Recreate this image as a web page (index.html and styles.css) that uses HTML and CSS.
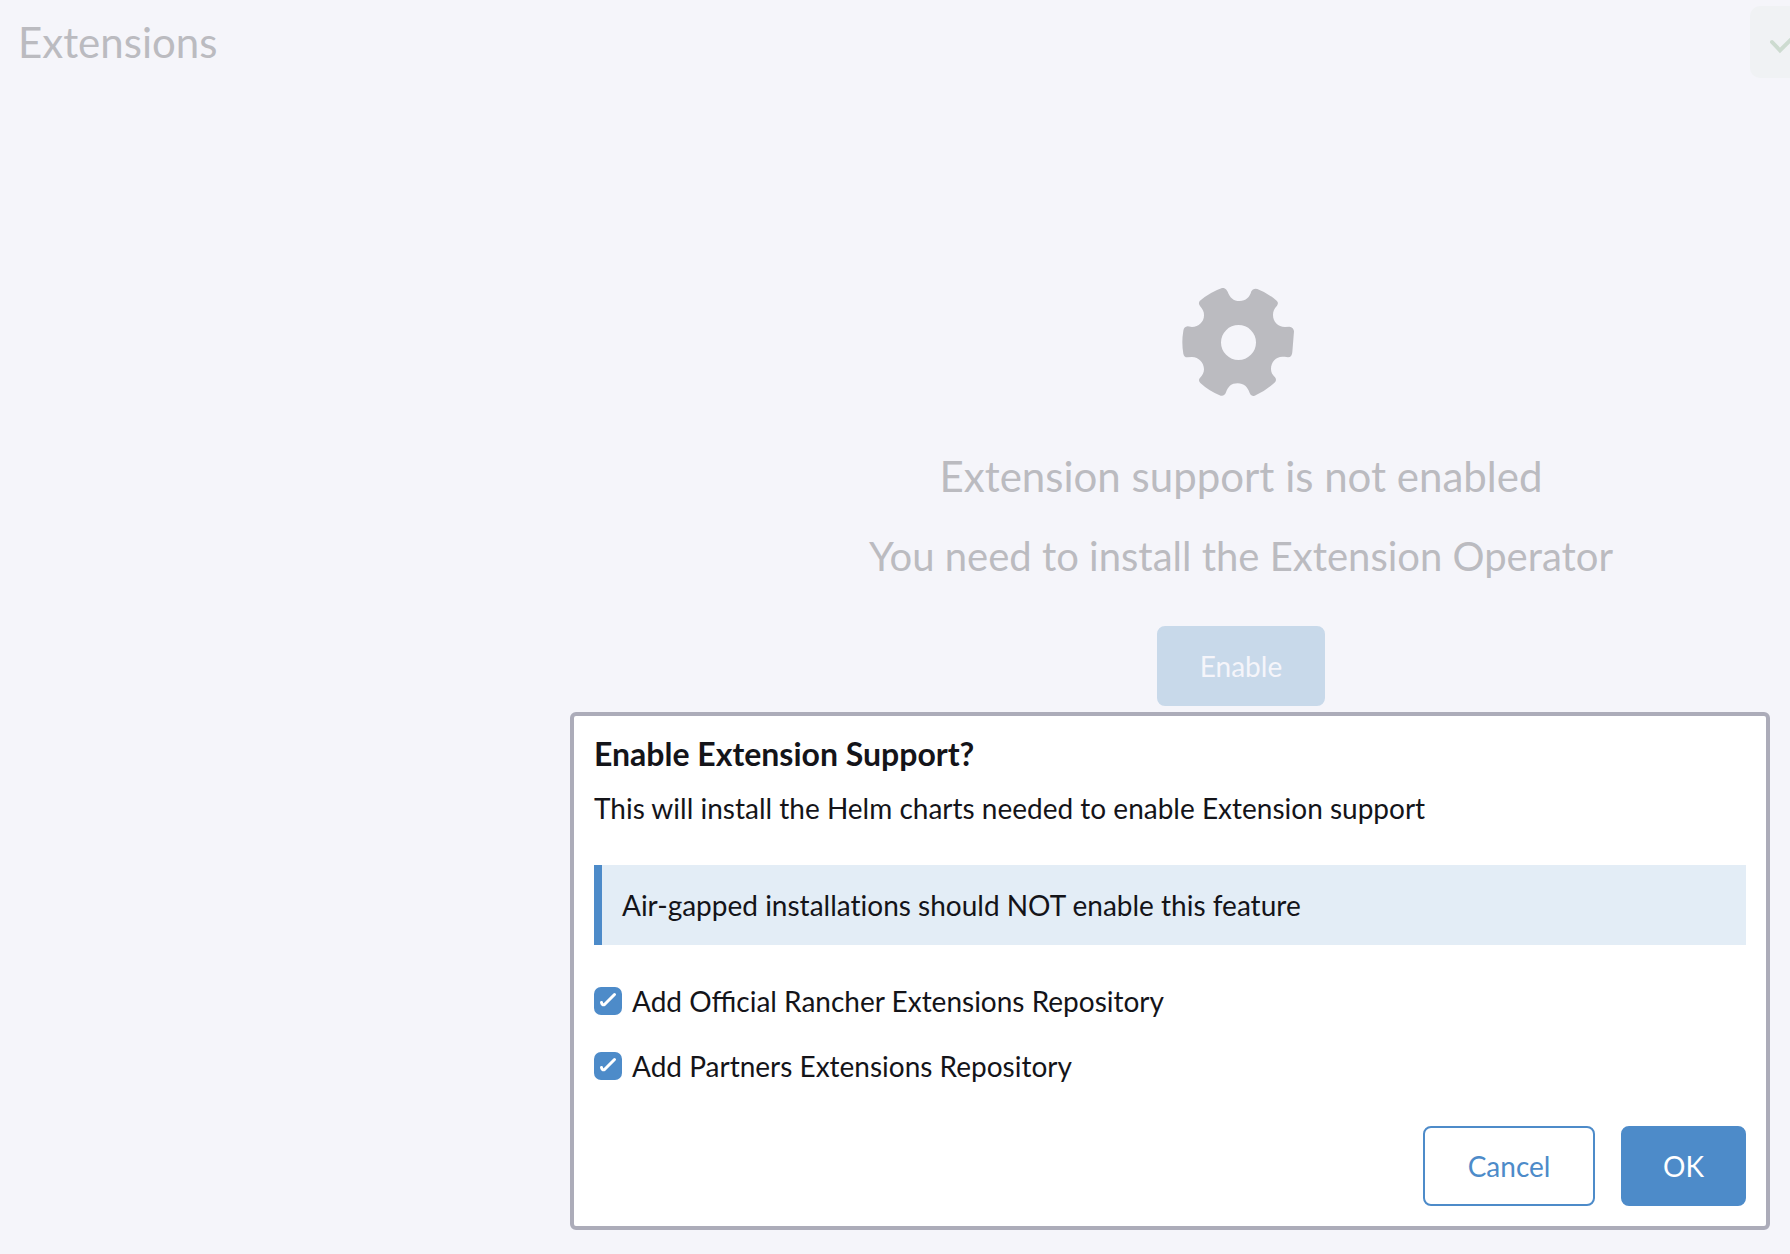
FILE: index.html
```html
<!DOCTYPE html>
<html lang="en">
<head>
<meta charset="utf-8">
<meta name="viewport" content="width=device-width, initial-scale=1">
<title>Extensions</title>
<link rel="stylesheet" href="styles.css">
</head>
<body>
<main class="page">
  <header class="page-header">
    <h1 class="page-title">Extensions</h1>
    <div class="status">
      <svg class="status-icon" viewBox="0 0 32 24" aria-hidden="true"><path d="M2 12 10 20.500 27 3.500"/></svg>
    </div>
  </header>
  <section class="empty">
    <svg class="gear" viewBox="96 54 336 324" aria-hidden="true">
      <path fill-rule="evenodd" d="M216 54Q227 52 233 65C239 82 250 93 269 93C288 93 299 82 304 64Q309 53 322 57Q354 69 380 92Q387 98 381 107C372 117 369 124 369 135C369 155 384 171 405 171L418 170Q431 172 432 184L427 246Q426 262 414 262C406 260 402 260 397 260C378 260 363 276 363 297C363 307 367 314 375 322Q381 329 375 337Q348 362 314 377Q303 381 299 369C293 351 282 340 263 340C244 340 234 350 228 367Q224 379 212 377Q178 364 151 339Q144 332 149 325C158 315 162 308 162 298C162 278 146 261 126 261L112 262Q102 262 100 251Q94 217 100 182Q102 170 113 169L126 171C146 171 162 156 162 136C162 125 159 119 150 108Q144 101 149 93Q179 67 216 54ZM265.500 165A52.500 52.500 0 1 0 265.500 270A52.500 52.500 0 1 0 265.500 165Z"/>
    </svg>
    <h2 class="empty-title">Extension support is not enabled</h2>
    <p class="empty-text">You need to install the Extension Operator</p>
    <button class="btn btn-muted" type="button">Enable</button>
  </section>
</main>
<div class="modal" role="dialog" aria-labelledby="modal-title">
  <h2 class="modal-title" id="modal-title">Enable Extension Support?</h2>
  <p class="modal-text">This will install the Helm charts needed to enable Extension support</p>
  <div class="banner">Air-gapped installations should NOT enable this feature</div>
  <div class="options">
    <label class="option"><span class="box"><input class="check" type="checkbox" checked><svg class="tick" viewBox="0 0 28 28" aria-hidden="true"><path d="M7.500 15.500Q8 18.500 10.500 17.500L20.500 7.500"/></svg></span>Add Official Rancher Extensions Repository</label>
    <label class="option"><span class="box"><input class="check" type="checkbox" checked><svg class="tick" viewBox="0 0 28 28" aria-hidden="true"><path d="M7.500 15.500Q8 18.500 10.500 17.500L20.500 7.500"/></svg></span>Add Partners Extensions Repository</label>
  </div>
  <div class="actions">
    <button class="btn btn-secondary" type="button">Cancel</button>
    <button class="btn btn-primary" type="button">OK</button>
  </div>
</div>
</body>
</html>
```
FILE: styles.css
```css
* { box-sizing: border-box; }

body {
  margin: 0;
  min-height: 100vh;
  background: #f5f5fa;
  color: #141419;
  font: 28px/36px Lato, "Liberation Sans", sans-serif;
  overflow: hidden;
}

h1, h2, p { margin: 0; font-weight: 400; }

.page { color: #bbbbc0; }

.page-header {
  display: flex;
  justify-content: space-between;
  align-items: center;
  padding: 6px 0 0 18px;
}

.page-title { font-size: 42px; line-height: 48px; }

/* The status badge runs past the right edge of the window. */
.status {
  display: flex;
  align-items: center;
  width: 120px;
  height: 72px;
  margin-right: -80px;
  padding-left: 20px;
  border-radius: 10px;
  background: #f0f2f4;
}

.status-icon {
  width: 32px;
  height: 24px;
  fill: none;
  stroke: #cddbd0;
  stroke-width: 4;
  stroke-linecap: round;
}

.empty {
  display: flex;
  flex-direction: column;
  align-items: center;
  margin-left: 692px;
  padding-top: 210px;
}

.gear { width: 112px; height: 108px; margin-right: 6px; fill: #bbbbc0; }

.empty-title { margin-top: 56px; font-size: 42px; line-height: 48px; }

.empty-text { margin: 32px 0 46px; font-size: 40px; line-height: 48px; }

.btn {
  height: 80px;
  padding: 0 40px;
  border: 2px solid #4d8bc9;
  border-radius: 8px;
  font: inherit;
}

.btn-primary { background: #4d8bc9; color: #fff; }
.btn-secondary { min-width: 172px; background: #fff; color: #4d8bc9; }
.btn-muted { min-width: 168px; border-color: #c8d9ea; background: #c8d9ea; color: #f5f5fa; }

.modal {
  position: absolute;
  top: 712px;
  right: 20px;
  width: 1200px;
  max-width: calc(100% - 40px);
  padding: 20px;
  border: 4px solid #acacb9;
  border-radius: 6px;
  background: #fff;
}

.modal-title { font-size: 32px; line-height: 36px; font-weight: 700; }
.modal-text { margin-top: 18px; }

.banner {
  margin: 39px 0 38px;
  padding: 22px 20px;
  border-left: 8px solid #4d8bc9;
  background: #e3edf6;
  font-variant-ligatures: no-common-ligatures;
}

.options { display: grid; gap: 29px; }

.option { display: flex; align-items: center; gap: 10px; }

.box { display: grid; width: 28px; height: 28px; }

.check, .tick { grid-area: 1 / 1; width: 28px; height: 28px; margin: 0; }

.check { appearance: none; border-radius: 7px; background: #4d8bc9; }

.tick {
  fill: none;
  stroke: #fff;
  stroke-width: 3;
  stroke-linecap: round;
  stroke-linejoin: round;
  pointer-events: none;
}

.actions {
  display: flex;
  justify-content: flex-end;
  gap: 26px;
  margin-top: 42px;
}
```
